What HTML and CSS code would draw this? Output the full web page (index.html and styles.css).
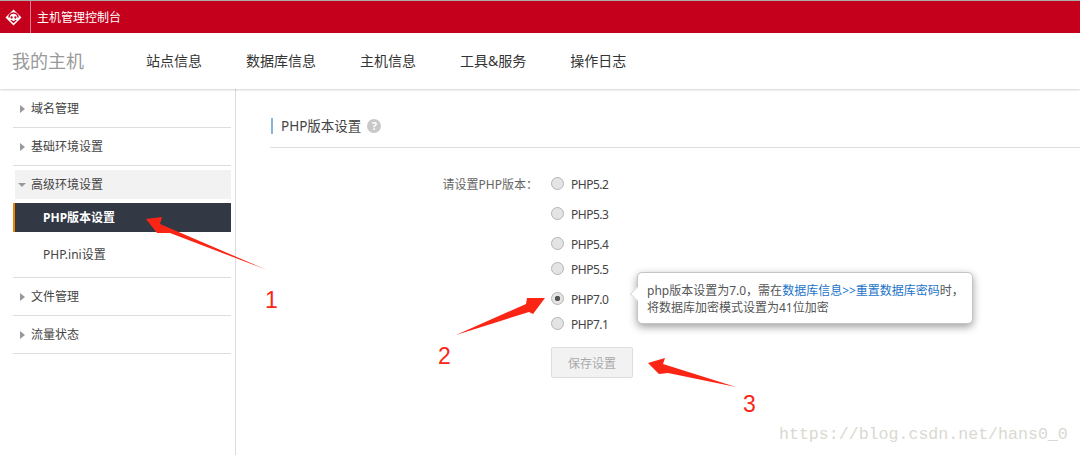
FILE: index.html
```html
<!DOCTYPE html>
<html lang="zh-CN">
  <head>
    <meta charset="UTF-8" />
    <meta name="viewport" content="width=device-width, initial-scale=1.0" />
    <title>主机管理控制台</title>
    <link rel="stylesheet" href="styles.css">
  </head>

  <body>
    <div class="topbar">
      <div class="logo">
        <svg width="17" height="17" viewBox="0 0 18 18">
          <path d="M9 0.5 L17.5 9 L9 17.5 L0.5 9 Z" fill="#fff" />
          <path d="M4.2 9 A4.8 4.8 0 0 1 13.8 9" fill="none" stroke="#c5001c" stroke-width="1.6" />
          <circle cx="7" cy="9" r="1.2" fill="#c5001c" />
          <circle cx="11" cy="9" r="1.2" fill="#c5001c" />
          <path d="M5.5 12 L9 15 L12.5 12 L11 11.6 L9 13 L7 11.6 Z" fill="#c5001c" />
        </svg>
      </div>
      <span class="console-name">主机管理控制台</span>
    </div>

    <div class="navbar">
      <div class="nav-title">我的主机</div>
      <ul class="nav-list">
        <li>站点信息</li>
        <li>数据库信息</li>
        <li>主机信息</li>
        <li>工具&amp;服务</li>
        <li>操作日志</li>
      </ul>
    </div>

    <div class="main">
      <!-- 左侧菜单 -->
      <div class="sidebar">
        <div class="menu-group">
          <div class="menu-head"><i class="arrow-right"></i>域名管理</div>
        </div>
        <div class="menu-group">
          <div class="menu-head"><i class="arrow-right"></i>基础环境设置</div>
        </div>
        <div class="menu-group open">
          <div class="menu-head"><i class="arrow-down"></i>高级环境设置</div>
          <div class="sub-item active">PHP版本设置</div>
          <div class="sub-item">PHP.ini设置</div>
        </div>
        <div class="menu-group">
          <div class="menu-head"><i class="arrow-right"></i>文件管理</div>
        </div>
        <div class="menu-group">
          <div class="menu-head"><i class="arrow-right"></i>流量状态</div>
        </div>
      </div>

      <!-- 内容 -->
      <div class="content">
        <div class="section-title">
          <span class="title-text">PHP版本设置</span>
          <span class="help">?</span>
        </div>

        <div class="form">
          <div class="form-label">请设置PHP版本：</div>
          <div class="form-body">
            <div class="radio-row tall"><i class="radio"></i>PHP5.2</div>
            <div class="radio-row tall"><i class="radio"></i>PHP5.3</div>
            <div class="radio-row"><i class="radio"></i>PHP5.4</div>
            <div class="radio-row tall"><i class="radio"></i>PHP5.5</div>
            <div class="radio-row">
              <i class="radio checked"></i>PHP7.0
              <div class="tip">
                php版本设置为7.0，需在<a class="tip-link">数据库信息&gt;&gt;重置数据库密码</a>时，<br>将数据库加密模式设置为41位加密
              </div>
            </div>
            <div class="radio-row"><i class="radio"></i>PHP7.1</div>
            <button class="btn-save" type="button">保存设置</button>
          </div>
        </div>
      </div>
    </div>

    <!-- 截图上的标注 -->
    <svg class="marks" width="1080" height="455" viewBox="0 0 1080 455">
      <polygon fill="#fb2516" points="146,219 162,217 160,224 267,270 170,233 157,233" />
      <polygon fill="#fb2516" points="545,298 527,298 526,304 456,335 529,312 533,314" />
      <polygon fill="#fb2516" points="648,363 665,358 663,364 736,387 668,373 659,374" />
    </svg>
    <span class="mark-num num-1">1</span>
    <span class="mark-num num-2">2</span>
    <span class="mark-num num-3">3</span>
    <span class="watermark">https://blog.csdn.net/hans0_0</span>
  </body>
</html>
```

FILE: styles.css
```css
html,
body {
  margin: 0;
  padding: 0;
}

body {
  position: relative;
  width: 1080px;
  height: 455px;
  overflow: hidden;
  background: #fff;
  font-family: "Noto Sans", "Noto Sans CJK SC", sans-serif;
  font-size: 12px;
  color: #444;
}

ul,
li {
  list-style: none;
  margin: 0;
  padding: 0;
}

/* 顶部红条 */
.topbar {
  display: flex;
  align-items: center;
  height: 32px;
  border-top: 1px solid #aaa;
  background: #c5001c;
  color: #fff;
}

.logo {
  display: flex;
  align-items: center;
  justify-content: center;
  box-sizing: border-box;
  width: 31px;
  height: 32px;
  padding-right: 3px;
  border-right: 1px solid #e4808e;
}

.console-name {
  margin-left: 6px;
}

/* 导航 */
.navbar {
  position: relative;
  z-index: 1;
  display: flex;
  align-items: center;
  box-sizing: border-box;
  height: 56px;
  padding-bottom: 2px;
  background: #fff;
  box-shadow: 0 1px 2px rgba(0, 0, 0, 0.18);
}

.nav-title {
  width: 146px;
  padding-left: 12px;
  box-sizing: border-box;
  font-size: 18px;
  color: #999;
}

.nav-list {
  display: flex;
  gap: 44px;
  font-size: 14px;
  color: #333;
}

.main {
  display: flex;
  height: 366px;
}

/* 左侧菜单 */
.sidebar {
  width: 236px;
  box-sizing: border-box;
  padding: 1px 4px 0 13px;
  border-right: 1px solid #ddd;
}

.menu-group {
  height: 37px;
  border-bottom: 1px solid #ddd;
}

.menu-group.open {
  height: 107px;
  padding-top: 4px;
}

.menu-head {
  position: relative;
  display: flex;
  align-items: center;
  box-sizing: border-box;
  height: 37px;
  padding: 0 0 2px 18px;
  color: #444;
}

.arrow-right,
.arrow-down {
  position: absolute;
  width: 0;
  height: 0;
}

.arrow-right {
  left: 7px;
  top: 15px;
  border-left: 5px solid #999;
  border-top: 4px solid transparent;
  border-bottom: 4px solid transparent;
}

.arrow-down {
  left: 3px;
  top: 13px;
  border-top: 4px solid #999;
  border-left: 4px solid transparent;
  border-right: 4px solid transparent;
}

.open .menu-head {
  height: 29px;
  margin: 0 0 4px 2px;
  padding-left: 16px;
  background: #f2f2f2;
}

.sub-item {
  display: flex;
  align-items: center;
  box-sizing: border-box;
  height: 29px;
  padding: 0 0 2px 30px;
  margin-bottom: 8px;
  color: #444;
}

.sub-item.active {
  padding-left: 28px;
  border-left: 2px solid #f08300;
  background: #323844;
  color: #fff;
  font-weight: 700;
}

/* 内容 */
.content {
  flex: 1;
  padding-left: 34px;
}

.section-title {
  display: flex;
  align-items: center;
  box-sizing: border-box;
  height: 58px;
  margin-top: 1px;
  padding: 15px 0 0 1px;
  border-bottom: 1px solid #ddd;
}

.title-text {
  height: 16px;
  padding-left: 8px;
  border-left: 2px solid #87b5dc;
  font-size: 13.5px;
  line-height: 16px;
  color: #444;
}

.help {
  width: 14px;
  height: 14px;
  margin-left: 6px;
  border-radius: 50%;
  background: #c8c8c8;
  color: #fff;
  font-size: 11px;
  font-weight: 700;
  line-height: 14px;
  text-align: center;
}

.form {
  display: flex;
  margin-top: 24px;
}

.form-label {
  width: 268px;
  height: 25px;
  line-height: 25px;
  text-align: right;
  color: #666;
}

.form-body {
  margin-left: 13px;
}

.radio-row {
  position: relative;
  display: flex;
  align-items: flex-start;
  height: 25px;
  line-height: 25px;
  letter-spacing: -0.5px;
  color: #444;
}

.radio-row.tall {
  height: 30px;
}

.radio {
  flex: none;
  width: 11px;
  height: 11px;
  margin: 5px 7px 0 0;
  border: 1px solid #b4b4b4;
  border-radius: 50%;
  background: #e4e4e4;
}

.radio.checked {
  background: radial-gradient(circle, #555 0 2.5px, #e4e4e4 3px);
}

.tip {
  position: absolute;
  left: 86px;
  top: -15px;
  width: 336px;
  height: 52px;
  box-sizing: border-box;
  padding: 9px;
  border: 1px solid #c4c4c4;
  border-radius: 5px;
  background: #fff;
  box-shadow: 0 3px 9px rgba(0, 0, 0, 0.38);
  letter-spacing: 0;
  line-height: 17px;
  color: #555;
  white-space: nowrap;
}

.tip::before {
  content: "";
  position: absolute;
  left: -6px;
  top: 16px;
  width: 9px;
  height: 9px;
  border-left: 1px solid #ddd;
  border-bottom: 1px solid #ddd;
  background: #fff;
  transform: rotate(45deg);
}

.tip-link {
  color: #1a73c9;
}

.btn-save {
  display: block;
  width: 82px;
  height: 31px;
  margin-top: 10px;
  border: 1px solid #ddd;
  border-radius: 2px;
  background: #f2f2f2;
  color: #aaa;
  font-family: inherit;
  font-size: 12px;
}

/* 标注 */
.marks {
  position: absolute;
  left: 0;
  top: 0;
  pointer-events: none;
}

.mark-num {
  position: absolute;
  font-family: "Liberation Sans", sans-serif;
  font-size: 23px;
  line-height: 26px;
  color: #fb2516;
}

.num-1 {
  left: 265px;
  top: 287px;
}

.num-2 {
  left: 438px;
  top: 343px;
}

.num-3 {
  left: 743px;
  top: 391px;
}

.watermark {
  position: absolute;
  left: 779px;
  top: 424px;
  font-family: "Liberation Mono", monospace;
  font-size: 16.6px;
  line-height: 22px;
  color: #d9d9d2;
}
```
